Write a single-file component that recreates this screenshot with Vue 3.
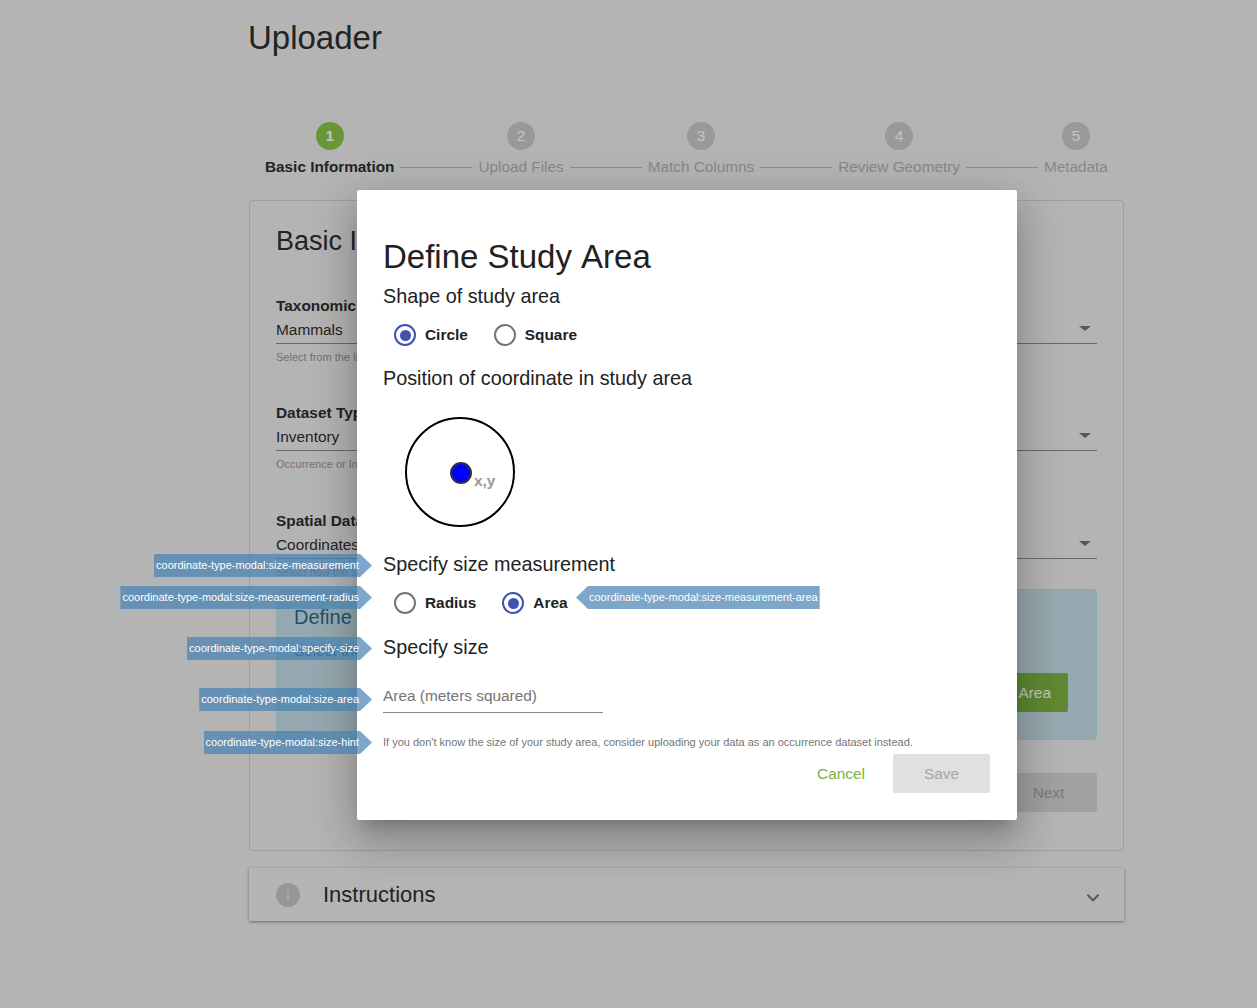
<script setup>
const steps = [
  { n: 1, label: 'Basic Information', active: true },
  { n: 2, label: 'Upload Files' },
  { n: 3, label: 'Match Columns' },
  { n: 4, label: 'Review Geometry' },
  { n: 5, label: 'Metadata' },
]

const fields = [
  { label: 'Taxonomic Group', value: 'Mammals', hint: 'Select from the list' },
  { label: 'Dataset Type', value: 'Inventory', hint: 'Occurrence or Inventory' },
  { label: 'Spatial Data', value: 'Coordinates', hint: 'Select how the spatial data is provided' },
]

// labels that hang off the left edge of the dialog
const tags = [
  { text: 'coordinate-type-modal:size-measurement', top: 554 },
  { text: 'coordinate-type-modal:size-measurement-radius', top: 586 },
  { text: 'coordinate-type-modal:specify-size', top: 637 },
  { text: 'coordinate-type-modal:size-area', top: 688 },
  { text: 'coordinate-type-modal:size-hint', top: 731 },
]
</script>

<template>
  <div class="page">
    <main class="content">
      <h1 class="page-title">Uploader</h1>

      <div class="stepper">
        <template v-for="(s, i) in steps" :key="s.n">
          <div class="step" :class="{ active: s.active }">
            <span class="step-num">{{ s.n }}</span>
            <span class="step-label">{{ s.label }}</span>
          </div>
          <span v-if="i < steps.length - 1" class="step-line"></span>
        </template>
      </div>

      <section class="card">
        <h2 class="card-title">Basic Information</h2>
        <div v-for="f in fields" :key="f.label" class="field">
          <div class="field-label">{{ f.label }}</div>
          <div class="field-value">
            <span>{{ f.value }}</span>
            <span class="caret"></span>
          </div>
          <div class="field-hint">{{ f.hint }}</div>
        </div>

        <div class="define-box">
          <div class="define-title">Define Study Area</div>
          <div class="define-sub">Select the shape and size of your study area</div>
          <button class="define-btn">Define Study Area</button>
        </div>

        <div class="card-foot">
          <button class="next-btn">Next</button>
        </div>
      </section>

      <section class="instructions">
        <svg class="info-icon" width="24" height="24" viewBox="0 0 24 24">
          <circle cx="12" cy="12" r="12" fill="#c4c4c4" />
          <rect x="11" y="10.5" width="2" height="7" fill="#e0e0e0" />
          <rect x="11" y="7" width="2" height="2" fill="#e0e0e0" />
        </svg>
        <span class="instructions-label">Instructions</span>
        <svg class="chevron" width="14" height="10" viewBox="0 0 14 10">
          <path d="M1.5 1.8 L7 7.4 L12.5 1.8" fill="none" stroke="#6e6e6e" stroke-width="2" />
        </svg>
      </section>
    </main>

    <div class="scrim"></div>

    <div class="dialog">
      <h2 class="dialog-title">Define Study Area</h2>
      <h3 class="sub sub-shape">Shape of study area</h3>
      <div class="radios">
        <label class="radio"><span class="dot on"></span>Circle</label>
        <label class="radio"><span class="dot"></span>Square</label>
      </div>

      <h3 class="sub sub-position">Position of coordinate in study area</h3>
      <svg class="diagram" width="112" height="112" viewBox="0 0 112 112">
        <circle cx="56" cy="56" r="54" fill="#fff" stroke="#000" stroke-width="2" />
        <circle cx="57" cy="57" r="10" fill="#0000ff" stroke="#333" stroke-width="2" />
        <text x="70" y="70" class="xy">x,y</text>
      </svg>

      <h3 class="sub sub-measure">Specify size measurement</h3>
      <div class="radios radios-measure">
        <label class="radio"><span class="dot"></span>Radius</label>
        <label class="radio"><span class="dot on"></span>Area</label>
      </div>

      <h3 class="sub sub-size">Specify size</h3>
      <input class="size-input" type="text" placeholder="Area (meters squared)" />
      <p class="size-hint">If you don't know the size of your study area, consider uploading your data as an occurrence dataset instead.</p>

      <div class="actions">
        <button class="btn-cancel">Cancel</button>
        <button class="btn-save">Save</button>
      </div>
    </div>

    <div
      v-for="t in tags"
      :key="t.text"
      class="tag"
      :style="{ top: t.top + 'px' }"
    >{{ t.text }}</div>
    <div class="tag tag-right">coordinate-type-modal:size-measurement-area</div>
  </div>
</template>

<style>
body {
  margin: 0;
  background: #fff;
}
</style>

<style scoped>
.page {
  position: relative;
  height: 1008px;
  overflow: hidden;
  font-family: "Liberation Sans", Arial, sans-serif;
  color: #2e2e2e;
  background: #ebebeb;
}
.content {
  width: 875px;
  margin-left: 249px;
}
.page-title {
  margin: 0 0 0 -1px;
  padding-top: 19px;
  height: 98px;
  box-sizing: border-box;
  font-size: 33px;
  line-height: 38px;
  font-weight: 400;
}

/* stepper */
.stepper {
  display: flex;
  align-items: flex-end;
  gap: 6px;
  padding-left: 16px;
  height: 78px;
  margin-bottom: 24px;
  box-sizing: border-box;
}
.step {
  display: flex;
  flex-direction: column;
  align-items: center;
  gap: 8px;
  color: #b0b0b0;
  font-size: 15.34px;
  line-height: 18px;
  white-space: nowrap;
}
.step-num {
  width: 28px;
  height: 28px;
  border-radius: 50%;
  background: #c8c8c8;
  color: #fff;
  font-size: 15.4px;
  line-height: 28px;
  text-align: center;
}
.step.active {
  color: #2e2e2e;
  font-weight: 700;
}
.step.active .step-num {
  background: #8bc34a;
}
.step-line {
  width: 72px;
  height: 1px;
  margin-bottom: 8px;
  background: #b4b4b4;
  flex: none;
}

/* card behind the dialog */
.card {
  height: 651px;
  box-sizing: border-box;
  padding: 26px 26px 0;
  border: 1px solid #cfcfcf;
  border-radius: 3px;
}
.card-title {
  margin: 0 0 40.5px;
  font-size: 27px;
  line-height: 29px;
  font-weight: 400;
}
.field {
  height: 107.5px;
}
.field-label {
  font-size: 15.4px;
  font-weight: 700;
  line-height: 18px;
}
.field-value {
  position: relative;
  height: 29px;
  box-sizing: border-box;
  padding-top: 6px;
  border-bottom: 1px solid #8a8a8a;
  font-size: 15.4px;
  line-height: 18px;
}
.caret {
  position: absolute;
  right: 6px;
  top: 11px;
  border-left: 6px solid transparent;
  border-right: 6px solid transparent;
  border-top: 5px solid #727272;
}
.field-hint {
  margin-top: 7px;
  font-size: 11px;
  line-height: 13px;
  color: #949494;
}
.define-box {
  position: relative;
  height: 151px;
  margin-top: -30px;
  box-sizing: border-box;
  padding: 15px 17px 0;
  border: 1px solid #b4dce4;
  border-radius: 4px;
  background: #c4dce6;
  color: #2a6a90;
}
.define-title {
  font-size: 20px;
  line-height: 24px;
}
.define-sub {
  margin-top: 13px;
  font-size: 15.4px;
}
.define-btn {
  position: absolute;
  right: 28px;
  top: 83px;
  height: 39px;
  padding: 0 17px;
  border: 0;
  border-radius: 2px;
  background: #7cb342;
  color: #fff;
  font: 15.4px "Liberation Sans", Arial, sans-serif;
}
.card-foot {
  display: flex;
  justify-content: flex-end;
  margin-top: 33px;
}
.next-btn {
  width: 97px;
  height: 39px;
  border: 0;
  border-radius: 2px;
  background: #d2d2d2;
  color: #a0a0a0;
  font: 15.4px "Liberation Sans", Arial, sans-serif;
}

/* instructions panel */
.instructions {
  display: flex;
  align-items: center;
  height: 53px;
  margin-top: 17px;
  padding: 0 24px 0 27px;
  box-shadow: 0 1px 3px rgba(0, 0, 0, 0.4);
}
.info-icon {
  flex: none;
}
.instructions-label {
  margin-left: 23px;
  font-size: 22px;
}
.chevron {
  margin-left: auto;
  margin-top: 7px;
}

.scrim {
  position: absolute;
  inset: 0;
  background: rgba(0, 0, 0, 0.23);
}

/* dialog */
.dialog {
  position: absolute;
  left: 357px;
  top: 190px;
  width: 660px;
  height: 630px;
  box-sizing: border-box;
  padding: 47px 27px 0 26px;
  border-radius: 2px;
  color: #212121;
  background: #fff;
  box-shadow: 0 11px 15px -7px rgba(0, 0, 0, 0.2), 0 24px 38px 3px rgba(0, 0, 0, 0.14), 0 9px 46px 8px rgba(0, 0, 0, 0.12);
}
.dialog-title {
  margin: 0;
  font-size: 33px;
  line-height: 40px;
  font-weight: 400;
  font-kerning: none;
}
.sub {
  margin: 0;
  font-size: 19.8px;
  line-height: 24px;
  font-weight: 400;
}
.sub-shape {
  margin-top: 7px;
}
.radios {
  display: flex;
  gap: 26px;
  height: 22px;
  margin-top: 16px;
  padding-left: 11px;
}
.radio {
  display: flex;
  align-items: center;
  gap: 9px;
  font-size: 15.4px;
  line-height: 18px;
  font-weight: 700;
}
.dot {
  position: relative;
  width: 22px;
  height: 22px;
  box-sizing: border-box;
  border: 2px solid #757575;
  border-radius: 50%;
}
.dot.on {
  border-color: #3f51b5;
}
.dot.on::after {
  content: "";
  position: absolute;
  left: 3.5px;
  top: 3.5px;
  width: 11px;
  height: 11px;
  border-radius: 50%;
  background: #3f51b5;
}
.sub-position {
  margin-top: 20px;
}
.diagram {
  display: block;
  margin: 26px 0 0 21px;
}
.xy {
  font: 700 15.4px "Liberation Sans", Arial, sans-serif;
  fill: #999;
}
.sub-measure {
  margin-top: 24px;
}
.radios-measure {
  margin-top: 16px;
}
.sub-size {
  margin-top: 21px;
}
.size-input {
  display: block;
  width: 220px;
  height: 30px;
  margin-top: 24px;
  padding: 0 0 4px;
  box-sizing: border-box;
  border: 0;
  border-bottom: 1px solid #8a8a8a;
  outline: 0;
  background: transparent;
  font: 15.4px "Liberation Sans", Arial, sans-serif;
  color: #212121;
}
.size-input::placeholder {
  color: #757575;
  opacity: 1;
}
.size-hint {
  margin: 23px 0 0;
  font-size: 11px;
  line-height: 13px;
  color: #757575;
}
.actions {
  display: flex;
  justify-content: flex-end;
  align-items: center;
  gap: 28px;
  margin-top: 5px;
}
.btn-cancel {
  padding: 0;
  border: 0;
  background: none;
  color: #7cb342;
  font: 15.4px "Liberation Sans", Arial, sans-serif;
}
.btn-save {
  width: 97px;
  height: 39px;
  border: 0;
  border-radius: 2px;
  background: #e0e0e0;
  color: #a6a6a6;
  font: 15.4px "Liberation Sans", Arial, sans-serif;
}

/* annotation tags */
.tag {
  position: absolute;
  right: 885px;
  height: 23px;
  box-sizing: border-box;
  padding: 0 13px 0 2px;
  background: rgba(70, 130, 180, 0.7);
  color: #fff;
  font-size: 11px;
  line-height: 23px;
  white-space: nowrap;
  clip-path: polygon(0 0, calc(100% - 12px) 0, 100% 50%, calc(100% - 12px) 100%, 0 100%);
}
.tag-right {
  right: auto;
  left: 576px;
  top: 586px;
  padding: 0 2px 0 13px;
  clip-path: polygon(12px 0, 100% 0, 100% 100%, 12px 100%, 0 50%);
}
</style>
